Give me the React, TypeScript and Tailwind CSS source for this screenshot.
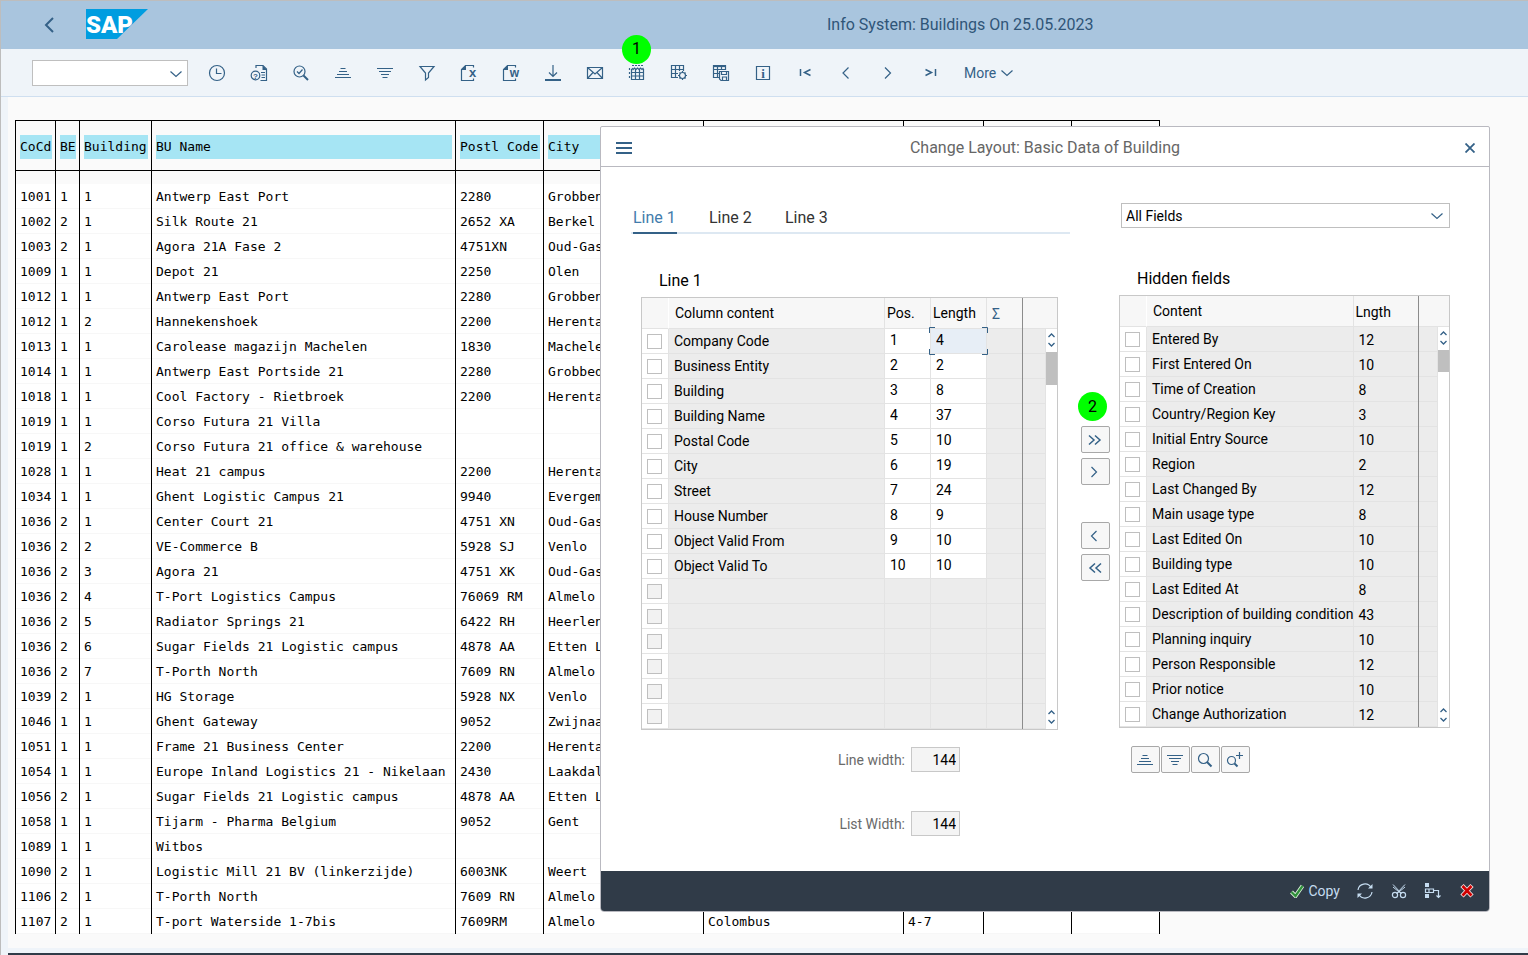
import React, { useState } from "react";

const SANS = "font-['Roboto','Liberation_Sans',sans-serif]";

// CoCd, BE, Building, BU Name, Postl Code, City, Street, House number
const buildings: string[][] = [
  ["1001", "1", "1", "Antwerp East Port", "2280", "Grobbendonk"],
  ["1002", "2", "1", "Silk Route 21", "2652 XA", "Berkel"],
  ["1003", "2", "1", "Agora 21A Fase 2", "4751XN", "Oud-Gastel"],
  ["1009", "1", "1", "Depot 21", "2250", "Olen"],
  ["1012", "1", "1", "Antwerp East Port", "2280", "Grobbendonk"],
  ["1012", "1", "2", "Hannekenshoek", "2200", "Herentals"],
  ["1013", "1", "1", "Carolease magazijn Machelen", "1830", "Machelen"],
  ["1014", "1", "1", "Antwerp East Portside 21", "2280", "Grobbedonk"],
  ["1018", "1", "1", "Cool Factory - Rietbroek", "2200", "Herentals"],
  ["1019", "1", "1", "Corso Futura 21 Villa", "", ""],
  ["1019", "1", "2", "Corso Futura 21 office & warehouse", "", ""],
  ["1028", "1", "1", "Heat 21 campus", "2200", "Herentals"],
  ["1034", "1", "1", "Ghent Logistic Campus 21", "9940", "Evergem"],
  ["1036", "2", "1", "Center Court 21", "4751 XN", "Oud-Gastel"],
  ["1036", "2", "2", "VE-Commerce B", "5928 SJ", "Venlo"],
  ["1036", "2", "3", "Agora 21", "4751 XK", "Oud-Gastel"],
  ["1036", "2", "4", "T-Port Logistics Campus", "76069 RM", "Almelo"],
  ["1036", "2", "5", "Radiator Springs 21", "6422 RH", "Heerlen"],
  ["1036", "2", "6", "Sugar Fields 21 Logistic campus", "4878 AA", "Etten Leur"],
  ["1036", "2", "7", "T-Porth North", "7609 RN", "Almelo"],
  ["1039", "2", "1", "HG Storage", "5928 NX", "Venlo"],
  ["1046", "1", "1", "Ghent Gateway", "9052", "Zwijnaarde"],
  ["1051", "1", "1", "Frame 21 Business Center", "2200", "Herentals"],
  ["1054", "1", "1", "Europe Inland Logistics 21 - Nikelaan", "2430", "Laakdal"],
  ["1056", "2", "1", "Sugar Fields 21 Logistic campus", "4878 AA", "Etten Leur"],
  ["1058", "1", "1", "Tijarm - Pharma Belgium", "9052", "Gent"],
  ["1089", "1", "1", "Witbos", "", ""],
  ["1090", "2", "1", "Logistic Mill 21 BV (linkerzijde)", "6003NK", "Weert"],
  ["1106", "2", "1", "T-Porth North", "7609 RN", "Almelo"],
  ["1107", "2", "1", "T-port Waterside 1-7bis", "7609RM", "Almelo", "Colombus", "4-7"],
];

const headings = ["CoCd", "BE", "Building", "BU Name", "Postl Code", "City", "", "", "", ""];
const widths = [40, 24, 72, 304, 88, 160, 200, 80, 88, 88];

const lineFields: [string, number][] = [
  ["Company Code", 4],
  ["Business Entity", 2],
  ["Building", 8],
  ["Building Name", 37],
  ["Postal Code", 10],
  ["City", 19],
  ["Street", 24],
  ["House Number", 9],
  ["Object Valid From", 10],
  ["Object Valid To", 10],
];

const hiddenFields: [string, number][] = [
  ["Entered By", 12],
  ["First Entered On", 10],
  ["Time of Creation", 8],
  ["Country/Region Key", 3],
  ["Initial Entry Source", 10],
  ["Region", 2],
  ["Last Changed By", 12],
  ["Main usage type", 8],
  ["Last Edited On", 10],
  ["Building type", 10],
  ["Last Edited At", 8],
  ["Description of building condition", 43],
  ["Planning inquiry", 10],
  ["Person Responsible", 12],
  ["Prior notice", 10],
  ["Change Authorization", 12],
];

function Icon({ children, size = 18 }: { children: React.ReactNode; size?: number }) {
  return (
    <svg width={size} height={size} viewBox={`0 0 ${size} ${size}`} fill="none" stroke="currentColor" strokeWidth="1.2" aria-hidden="true" className="shrink-0">
      {children}
    </svg>
  );
}

const glyph = { fill: "currentColor", stroke: "none", fontFamily: "Liberation Sans", fontWeight: 700 };

const SortUp = () => (
  <Icon>
    <path d="M6.5 4.5h5M5 7.5h8M3 10.5h12M1 13.5h16" />
  </Icon>
);
const SortDown = () => (
  <Icon>
    <path d="M1 4.5h16M3 7.5h12M5 10.5h8M6.5 13.5h5" />
  </Icon>
);
const ChevronDown = () => (
  <Icon size={14}>
    <path d="M1.5 4.5l5.5 5 5.5-5" />
  </Icon>
);

const tools: { label: string; icon: React.ReactNode }[] = [
  {
    label: "Execute",
    icon: (
      <Icon>
        <circle cx="9" cy="9" r="7.5" />
        <path d="M8.5 4.5v5h5" />
      </Icon>
    ),
  },
  {
    label: "Documentation",
    icon: (
      <Icon>
        <circle cx="5.5" cy="11.5" r="4.3" />
        <text x="5.5" y="14.5" fontSize="8" textAnchor="middle" {...glyph}>?</text>
        <path d="M6 4V1.5h7l3.5 3.5v11.5h-6" />
        <path d="M12.5 1v5h4.5z" fill="currentColor" stroke="none" />
        <path d="M11 8.5h4M11.5 11H15M11.5 13.5H15" />
      </Icon>
    ),
  },
  {
    label: "Details",
    icon: (
      <Icon>
        <circle cx="7.5" cy="7.5" r="5.5" />
        <path d="M5 7.5l2 2 3.500-4" />
        <path d="M11.5 11.5l4.500 4.500" strokeWidth="2" />
      </Icon>
    ),
  },
  { label: "Sort ascending", icon: <SortUp /> },
  { label: "Sort descending", icon: <SortDown /> },
  {
    label: "Filter",
    icon: (
      <Icon>
        <path d="M2 2.5h14L10.500 9v4.500L7.500 16V9z" />
      </Icon>
    ),
  },
  {
    label: "Spreadsheet",
    icon: (
      <Icon>
        <path d="M13.500 3.500v-2H5.500l-4 4v11h12v-2" />
        <path d="M6 1v5H1z" fill="currentColor" stroke="none" />
        <text x="12.500" y="13" fontSize="13" textAnchor="middle" {...glyph}>x</text>
      </Icon>
    ),
  },
  {
    label: "Word processing",
    icon: (
      <Icon>
        <path d="M13.500 3.500v-2H5.500l-4 4v11h12v-2" />
        <path d="M6 1v5H1z" fill="currentColor" stroke="none" />
        <text x="12.500" y="13" fontSize="12" textAnchor="middle" {...glyph}>w</text>
      </Icon>
    ),
  },
  {
    label: "Local file",
    icon: (
      <Icon>
        <path d="M9 1v11M5 8.500l4 4 4-4" />
        <path d="M1 16h16" strokeWidth="2" />
      </Icon>
    ),
  },
  {
    label: "Mail",
    icon: (
      <Icon>
        <path d="M1.500 3.500h15v11h-15zM1.500 3.500L9 10l7.500-6.500M1.500 14.500l5.500-6M16.500 14.500l-5.500-6" />
      </Icon>
    ),
  },
  {
    label: "Change layout",
    icon: (
      <Icon>
        <path d="M4 1.500h12" strokeDasharray="2 1" />
        <path d="M4 4l1 1.500L6.500 4 8 5.500 9.500 4 11 5.500 12.500 4 14 5.500 15.500 4" />
        <path d="M3.500 5v10.500h12V5M3.500 8.500h12M3.500 12h12M7.500 5v10.500M11.500 5v10.500" />
        <path d="M1.500 4v12" strokeDasharray="2 2" />
      </Icon>
    ),
  },
  {
    label: "Select layout",
    icon: (
      <Icon>
        <path d="M8 13.500H1.500v-12h12V7M1.500 5.500h12M1.500 9.500H8M5.500 1.500v12M9.500 1.500V7" />
        <circle cx="12.500" cy="11.500" r="3" />
        <path d="M12.500 7v1.500M12.500 14.500V16M8 11.500h1.500M15.500 11.500H17M9.500 8.500l1 1M14.500 13.500l1 1M15.500 8.500l-1 1M10.500 13.500l-1 1" />
      </Icon>
    ),
  },
  {
    label: "Save layout",
    icon: (
      <Icon>
        <path d="M7 13.500H1.500v-12h12V6M1.500 5.500h12M1.500 9.500H7M5.500 1.500v12M9.500 1.500V6" />
        <path d="M1.500 2.500h12" />
        <path d="M7.500 7.500h9v9H9L7.500 15zM9.500 7.500v3h5v-3M10.500 16.500V13h4v3.500" />
      </Icon>
    ),
  },
  {
    label: "Information",
    icon: (
      <Icon>
        <path d="M2.500 2.500h13v13h-13z" />
        <text x="9" y="13.500" fontSize="13" textAnchor="middle" fill="currentColor" stroke="none" fontFamily="Liberation Serif" fontWeight="700">i</text>
      </Icon>
    ),
  },
  {
    label: "First column",
    icon: (
      <Icon>
        <path d="M4.500 5v7M14.500 5.500l-6 3 6 3" strokeWidth="1.500" />
      </Icon>
    ),
  },
  {
    label: "Column left",
    icon: (
      <Icon>
        <path d="M10.500 3.500L5 9l5.500 5.500" />
      </Icon>
    ),
  },
  {
    label: "Column right",
    icon: (
      <Icon>
        <path d="M5 3.500L10.500 9 5 14.500" />
      </Icon>
    ),
  },
  {
    label: "Last column",
    icon: (
      <Icon>
        <path d="M13.500 5v7M3.500 5.500l6 3-6 3" strokeWidth="1.500" />
      </Icon>
    ),
  },
];

function Badge({ children }: { children: React.ReactNode }) {
  return (
    <span className="flex size-[29px] items-center justify-center rounded-full bg-[#00ff00] text-base text-black">{children}</span>
  );
}

function SmallButton({ label, children }: { label: string; children: React.ReactNode }) {
  return (
    <button aria-label={label} className="flex h-[27px] w-[29px] items-center justify-center rounded-xs border border-[#a8a8a8] bg-[#f7f7f7] pr-0.5 text-[#346187]">
      {children}
    </button>
  );
}

function Check({ label, disabled }: { label: string; disabled?: boolean }) {
  return (
    <input
      type="checkbox"
      aria-label={label}
      disabled={disabled}
      className="block size-[15px] appearance-none border border-[#bfbfbf] bg-white checked:bg-[#346187] disabled:bg-[#f2f2f2]"
    />
  );
}

function Arrows() {
  return (
    <svg width="11" height="23" viewBox="0 0 11 23" fill="none" stroke="#346187" strokeWidth="1.3" aria-hidden="true">
      <path d="M2.500 8l3-3 3 3M2.500 14l3 3 3-3" />
    </svg>
  );
}

function ScrollBar({ short }: { short?: boolean }) {
  return (
    <div className="flex w-[11px] shrink-0 flex-col bg-white">
      <div className="h-[31px] border-b border-[#e3e3e3] bg-[#f7f7f7]" />
      <Arrows />
      <div className={short ? "h-[22px] bg-[#bfbfbf]" : "h-[33px] bg-[#bfbfbf]"} />
      <div className="flex-1" />
      <Arrows />
    </div>
  );
}

const cell = "border-r border-b border-[#e3e3e3]";
// freeze line: unbroken dark rule, with the row rule drawn inside the cell
const fixedCell = "border-r border-[#8c8c8c] shadow-[inset_0_-1px_0_#e3e3e3]";

function LineTable() {
  const rows = Array.from({ length: 16 }, (_, i) => lineFields[i]);
  return (
    <div className="ml-2.5 flex w-[417px] border border-[#c8c8c8]">
      <table className="flex-1 table-fixed border-separate border-spacing-0 text-sm">
        <colgroup>
          <col className="w-[27px]" />
          <col className="w-[216px]" />
          <col className="w-[46px]" />
          <col className="w-[56px]" />
          <col className="w-[36px]" />
          <col />
        </colgroup>
        <thead>
          <tr className="h-[31px] bg-[#f7f7f7] text-left">
            <th className="border-r border-b border-[#e3e3e3] border-r-white" />
            <th className={`${cell} pl-1.5 font-normal`}>Column content</th>
            <th className={`${cell} pl-0.5 font-normal`}>Pos.</th>
            <th className={`${cell} pl-0.5 font-normal`}>Length</th>
            <th className={`${fixedCell} pl-[5px] font-normal text-[#346187]`}>Σ</th>
            <th className="border-b border-[#e3e3e3]" />
          </tr>
        </thead>
        <tbody>
          {rows.map((row, i) => (
            <tr key={i} className="h-[25px] bg-[#ececec]">
              <td className={`${cell} bg-white pl-[5px]`}>
                <Check label={row ? row[0] : `Empty line ${i + 1}`} disabled={!row} />
              </td>
              <td className={`${cell} pl-[5px]`}>{row?.[0]}</td>
              <td className={row ? `${cell} bg-white` : cell}>
                {row && <input aria-label={`Position of ${row[0]}`} defaultValue={i + 1} className="block h-6 w-full pb-0.5 pl-[5px] outline-none" />}
              </td>
              <td className={row ? `${cell} relative bg-white` : cell}>
                {row && (
                  <input
                    aria-label={`Length of ${row[0]}`}
                    defaultValue={row[1]}
                    className={`block h-6 w-full pb-0.5 pl-[5px] outline-none ${i === 0 ? "bg-[#e7eef6]" : ""}`}
                  />
                )}
                {i === 0 && (
                  <svg className="pointer-events-none absolute -top-0.5 -left-0.5 z-10" width="59" height="28" viewBox="0 0 59 28" fill="none" stroke="#346187">
                    <path d="M.5 6V.5H6M53 .5h5.500V6M58.500 22v5.500H53M6 27.500H.5V22" />
                  </svg>
                )}
              </td>
              <td className={fixedCell} />
              <td className={cell} />
            </tr>
          ))}
        </tbody>
      </table>
      <ScrollBar />
    </div>
  );
}

function HiddenTable() {
  return (
    <div className="flex w-[331px] border border-[#c8c8c8]">
      <table className="flex-1 table-fixed border-separate border-spacing-0 text-sm">
        <colgroup>
          <col className="w-[27px]" />
          <col className="w-[206px]" />
          <col className="w-[65px]" />
          <col />
        </colgroup>
        <thead>
          <tr className="h-[31px] bg-[#f7f7f7] text-left">
            <th className="border-r border-b border-[#e3e3e3] border-r-white" />
            <th className={`${cell} pl-1.5 font-normal`}>Content</th>
            <th className={`${fixedCell} pl-px font-normal`}>Lngth</th>
            <th className="border-b border-[#e3e3e3]" />
          </tr>
        </thead>
        <tbody>
          {hiddenFields.map(([name, length]) => (
            <tr key={name} className="h-[25px] bg-[#ececec]">
              <td className={`${cell} bg-white pl-[5px]`}>
                <Check label={name} />
              </td>
              <td className={`${cell} pl-[5px] whitespace-nowrap`}>{name}</td>
              <td className={`${fixedCell} pl-1`}>{length}</td>
              <td className={cell} />
            </tr>
          ))}
        </tbody>
      </table>
      <ScrollBar short />
    </div>
  );
}

function LayoutDialog() {
  const [tab, setTab] = useState(0);

  return (
    <section role="dialog" aria-label="Change Layout" className="absolute top-[29px] right-[38px] w-[890px] overflow-hidden rounded-t-xs rounded-b border border-[#b9b9c0] bg-white">
      <header className="flex h-10 items-center justify-between border-b border-[#b9b9c0] px-3.5 pt-[3px] text-[#346187]">
        <button aria-label="Menu">
          <Icon>
            <path d="M1 4h16M1 9h16M1 14h16" strokeWidth="2" />
          </Icon>
        </button>
        <h2 className="text-base text-[#666]">Change Layout: Basic Data of Building</h2>
        <button aria-label="Close" className="flex w-[18px] justify-end">
          <Icon size={10}>
            <path d="M.5.5l9 9M9.500.5l-9 9" strokeWidth="1.8" />
          </Icon>
        </button>
      </header>

      <div className="flex h-[704px] pl-[30px]">
        <div className="w-[439px]">
          <nav role="tablist" className="mt-9 flex gap-8 border-b-2 border-[#dde8f2] pl-0.5">
            {["Line 1", "Line 2", "Line 3"].map((name, i) => (
              <button
                key={name}
                role="tab"
                aria-selected={tab === i}
                onClick={() => setTab(i)}
                className={`-mb-0.5 h-[31px] w-11 border-b-2 text-left text-base whitespace-nowrap ${
                  tab === i ? "border-[#346187] text-[#427cac]" : "border-transparent text-[#333]"
                }`}
              >
                {name}
              </button>
            ))}
          </nav>
          <h3 className="mt-[35px] mb-1 pl-7 text-base">Line {tab + 1}</h3>
          <LineTable />
          <div className="mt-[17px] flex flex-col gap-[39px] pr-[110px] text-sm text-[#6a6a6a]">
            {["Line width:", "List Width:"].map((label) => (
              <label key={label} className="flex items-center justify-end gap-1.5">
                {label}
                <input readOnly value="144" className="h-[25px] w-[49px] border border-[#c8c8c8] bg-[#f4f4f4] pr-[3px] text-right text-black" />
              </label>
            ))}
          </div>
        </div>

        <div className="mt-[225px] ml-2 flex w-8 flex-col items-end gap-[5px]">
          <div className="self-start">
            <Badge>2</Badge>
          </div>
          <SmallButton label="Hide all fields">
            <Icon>
              <path d="M3 4.500L8 9l-5 4.500M9 4.500L14 9l-5 4.500" strokeWidth="1.5" />
            </Icon>
          </SmallButton>
          <SmallButton label="Hide selected fields">
            <Icon>
              <path d="M5.500 4l5 5-5 5" />
            </Icon>
          </SmallButton>
          <div className="h-[27px]" />
          <SmallButton label="Show selected fields">
            <Icon>
              <path d="M10.500 4l-5 5 5 5" />
            </Icon>
          </SmallButton>
          <SmallButton label="Show all fields">
            <Icon>
              <path d="M9 4.500L4 9l5 4.500M15 4.500L10 9l5 4.500" strokeWidth="1.5" />
            </Icon>
          </SmallButton>
        </div>

        <div className="ml-[9px] pt-9">
          <div className="relative ml-0.5">
            <select aria-label="Field group" className="h-[25px] w-full appearance-none border border-[#bfbfbf] bg-white pl-1 text-sm">
              <option>All Fields</option>
            </select>
            <span className="pointer-events-none absolute top-1.5 right-1.5 text-[#346187]">
              <ChevronDown />
            </span>
          </div>
          <h3 className="mt-[39px] mb-1 pl-[18px] text-base">Hidden fields</h3>
          <HiddenTable />
          <div className="mt-[18px] ml-3 flex gap-px">
            <SmallButton label="Sort ascending">
              <SortUp />
            </SmallButton>
            <SmallButton label="Sort descending">
              <SortDown />
            </SmallButton>
            <SmallButton label="Find">
              <Icon>
                <circle cx="7.5" cy="7.5" r="5" />
                <path d="M11 11l4.500 4.500" strokeWidth="2" />
              </Icon>
            </SmallButton>
            <SmallButton label="Find next">
              <Icon>
                <circle cx="5.5" cy="9.5" r="4" />
                <path d="M8.500 12.500l3 3" strokeWidth="2" />
                <path d="M13.500 1v7M10 4.500h7" />
              </Icon>
            </SmallButton>
          </div>
        </div>
      </div>

      <footer className="flex h-10 items-center justify-end gap-4 bg-[#303b48] pr-[13px] text-[#c5dcf0]">
        <button className="flex items-center gap-1 text-sm">
          <Icon size={14}>
            <path d="M1.500 8l4 4L12.500 2" stroke="#d8f0d8" strokeWidth="4" />
            <path d="M1.500 8l4 4L12.500 2" stroke="#2f8f3a" strokeWidth="2.2" />
          </Icon>
          Copy
        </button>
        <button aria-label="Refresh">
          <Icon>
            <path d="M2 8a7 7 0 0 1 13-2.500M16 10a7 7 0 0 1-13 2.500" />
            <path d="M16.500 2v4.500H12zM1.500 16v-4.500H6z" fill="currentColor" stroke="none" />
          </Icon>
        </button>
        <button aria-label="Cut">
          <Icon>
            <path d="M3 2.500l8.500 9M15 2.500l-8.500 9M3 5l8 6.500M15 5l-8 6.500" strokeWidth="1" />
            <circle cx="5" cy="13" r="2.6" />
            <circle cx="13" cy="13" r="2.6" />
          </Icon>
        </button>
        <button aria-label="Insert">
          <Icon>
            <path d="M1 1h4v4H1zM1 12h4v4H1z" fill="currentColor" stroke="none" />
            <path d="M1.500 7h8v3.500h-8zM5 7v3.500M10 8.500h4.500V15M12.500 13.500l2 2 2-2" />
          </Icon>
        </button>
        <button aria-label="Cancel">
          <Icon>
            <path d="M4 3.500l10 10.500M14 3.500L4 14" stroke="#f3dede" strokeWidth="4.5" />
            <path d="M4.500 4l9 9.500M13.500 4l-9 9.500" stroke="#d00000" strokeWidth="2.6" />
          </Icon>
        </button>
      </footer>
    </section>
  );
}

export default function App() {
  return (
    <div className={`min-h-screen overflow-hidden border-t border-l border-[#bdbdbd] bg-[#eff4f9] text-black ${SANS}`}>
      <header className="flex h-12 items-center bg-[#a9c5de]">
        <button aria-label="Back" className="ml-10 text-[#346187]">
          <Icon>
            <path d="M12 2L5 9l7 7" strokeWidth="2" />
          </Icon>
        </button>
        <svg className="mb-0.5 ml-[27px]" width="62" height="30" viewBox="0 0 62 30" role="img" aria-label="SAP">
          <path d="M0 0h62L31 30H0z" fill="#009de0" />
          <text x="0" y="24" fontSize="24" fontFamily="Roboto" fontWeight="900" fill="#fff">SAP</text>
        </svg>
        <h1 className="ml-[679px] text-base whitespace-nowrap text-[#2f5578]">Info System: Buildings On 25.05.2023</h1>
      </header>

      <div className="flex h-12 items-center border-b border-[#cfdff0] text-[#346187]">
        <div className="relative ml-[31px] mr-2">
          <input aria-label="Command" className="block h-[26px] w-[156px] border border-[#bfbfbf] bg-white px-1 text-sm outline-none" />
          <span className="pointer-events-none absolute top-[7px] right-[5px]">
            <ChevronDown />
          </span>
        </div>
        {tools.map((tool) => (
          <button key={tool.label} aria-label={tool.label} className="relative flex h-8 w-[42px] items-center justify-center">
            {tool.icon}
            {tool.label === "Change layout" && (
              <span className="absolute -top-[22px] left-1.5">
                <Badge>1</Badge>
              </span>
            )}
          </button>
        ))}
        <button className="ml-3 flex items-center gap-1 text-sm">
          More <ChevronDown />
        </button>
      </div>

      <main className="relative ml-[7px] bg-[#fafafa] pt-[23px] pb-3.5">
        <table className="ml-[7px] w-[1145px] table-fixed border-separate border-spacing-0 border-t border-l border-black font-['DejaVu_Sans_Mono',monospace] text-[13px]">
          <colgroup>
            {widths.map((w, i) => (
              <col key={i} style={{ width: w }} />
            ))}
          </colgroup>
          <thead>
            <tr className="text-left">
              {headings.map((h, i) => (
                <th key={i} className="h-[50px] border-r border-b border-black pt-0.5 pr-[3px] pl-1 font-normal whitespace-nowrap">
                  <div className="h-6 bg-[#a6e5f4] leading-6">{h}</div>
                </th>
              ))}
            </tr>
          </thead>
          <tbody>
            <tr className="h-[13px]">
              {headings.map((_, i) => (
                <td key={i} className="border-r border-black" />
              ))}
            </tr>
            {buildings.map((row, r) => (
              <tr key={r} className="h-[25px] bg-white">
                {headings.map((_, i) => (
                  <td key={i} className="border-r border-black pt-px pl-1 whitespace-nowrap shadow-[inset_0_-1px_0_#f7f7f7]">
                    {row[i]}
                  </td>
                ))}
              </tr>
            ))}
          </tbody>
        </table>
        <LayoutDialog />
      </main>
      <div className="mt-[5px] ml-[7px] h-0.5 bg-[#303b48]" />
    </div>
  );
}
